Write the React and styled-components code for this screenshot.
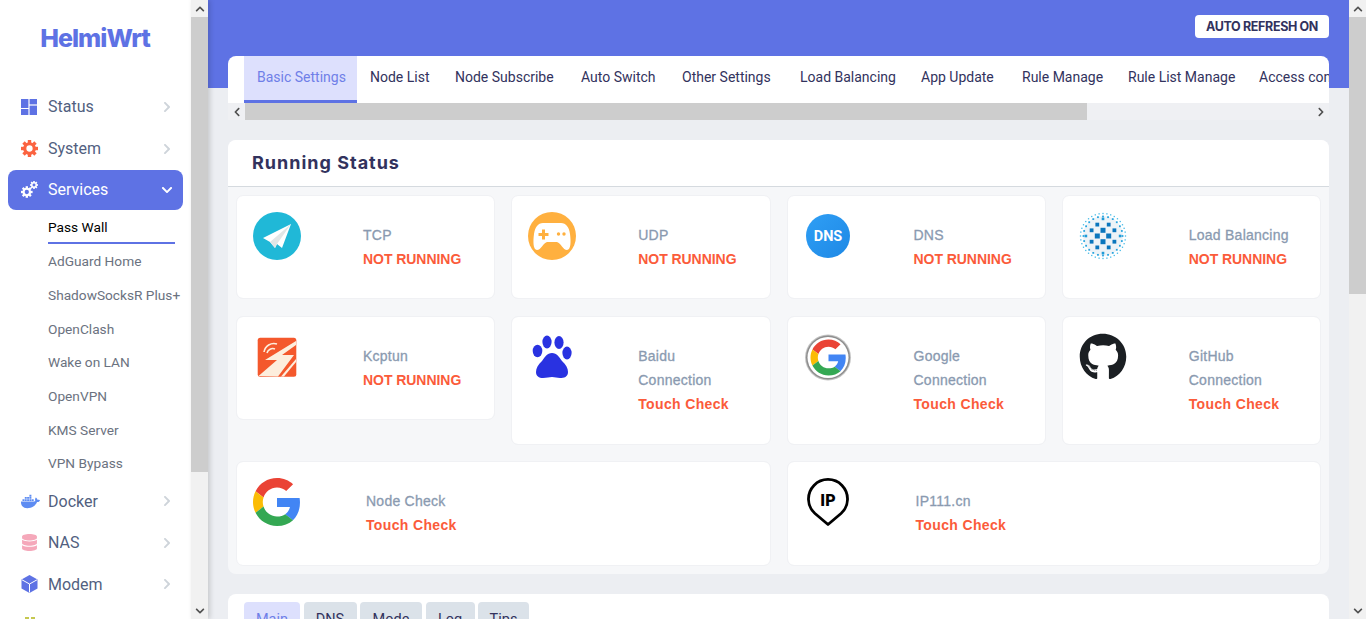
import React from 'react';
import styled, { createGlobalStyle } from 'styled-components';
import {
  FaChevronRight,
  FaChevronDown,
  FaChevronUp,
  FaChevronLeft,
  FaDocker,
  FaDatabase,
  FaGithub,
} from 'react-icons/fa';

const uiFont = 'Roboto, "Liberation Sans", sans-serif';
const cardFont = '"Liberation Sans", Arial, sans-serif';

const GlobalStyle = createGlobalStyle`
  html, body {
    margin: 0;
    height: 100%;
    overflow: hidden;
    background: #eceef2;
    font-family: ${uiFont};
  }
  #root {
    height: 100%;
  }
`;

const Page = styled.div`
  display: flex;
  height: 619px;
  overflow: hidden;
`;

const Sidebar = styled.aside`
  width: 191px;
  flex: none;
  background: #fff;
  overflow: hidden;
  display: flex;
  flex-direction: column;
`;

const Logo = styled.div`
  height: 76px;
  padding-bottom: 2px;
  flex: none;
  display: flex;
  justify-content: center;
  align-items: center;
  padding-right: 1px;
  color: #5e72e4;
  font-family: Inter, sans-serif;
  font-weight: 800;
  font-size: 25px;
  letter-spacing: -0.95px;
`;

const NavList = styled.nav`
  display: flex;
  flex-direction: column;
  padding: 8px 8px 0;
`;

const NavItem = styled.div`
  height: ${p => p.$h || 41.5}px;
  flex: none;
  display: flex;
  align-items: center;
  padding: 0 13px;
  border-radius: 8px;
  font-size: 16px;
  color: ${p => (p.$active ? '#fff' : '#525f7f')};
  background: ${p => (p.$active ? '#5e72e4' : 'transparent')};
`;

const NavIcon = styled.span`
  width: 27px;
  flex: none;
  display: flex;
  align-items: center;
  color: ${p => p.$color};
  font-size: ${p => p.$size || 17}px;
`;

const NavLabel = styled.span`
  flex: 1;
`;

const NavArrow = styled.span`
  display: flex;
  color: ${p => (p.$active ? '#fff' : '#ced4da')};
  font-size: 12px;
  margin-right: -3px;
`;

const SubList = styled.div`
  display: flex;
  flex-direction: column;
  padding: 0 0 1px 40px;
`;

const SubItem = styled.div`
  height: 33.7px;
  flex: none;
  box-sizing: border-box;
  padding-top: 2px;
  display: flex;
  align-items: center;
  font-size: 13.7px;
  white-space: nowrap;
  color: ${p => (p.$active ? '#000' : '#6b7280')};
  ${p => p.$active && 'width: 127px; height: 34px; padding-top: 3px; border-bottom: 2px solid #5e72e4;'}
`;

const VScrollbar = styled.div`
  width: 17px;
  flex: none;
  height: 619px;
  background: #f1f1f1;
  display: flex;
  flex-direction: column;
  justify-content: space-between;
  box-shadow: ${p => (p.$shadow ? '2px 0 5px rgba(0, 0, 0, 0.16)' : 'none')};
  z-index: 2;
`;

const VThumb = styled.div`
  width: 17px;
  height: ${p => p.$h}px;
  background: #cdcdcd;
  margin-bottom: auto;
`;

const ScrollButton = styled.div`
  width: 17px;
  height: 17px;
  flex: none;
  display: flex;
  align-items: center;
  justify-content: center;
  color: #505050;
  font-size: 10px;
  background: ${p => p.$bg || '#f1f1f1'};
`;

const Main = styled.main`
  flex: 1;
  min-width: 0;
  overflow: hidden;
  background: linear-gradient(#5e72e4 88px, #eceef2 88px);
  padding: 15px 20px 0;
  display: flex;
  flex-direction: column;
`;

const TopBar = styled.div`
  display: flex;
  justify-content: flex-end;
  margin-bottom: 18px;
`;

const RefreshButton = styled.div`
  height: 23px;
  width: 134px;
  display: flex;
  align-items: center;
  justify-content: center;
  background: #fff;
  border-radius: 4px;
  font-family: Inter, sans-serif;
  font-size: 12.5px;
  font-weight: 700;
  letter-spacing: -0.36px;
  color: #32325d;
`;

const TabsPanel = styled.div`
  margin-bottom: 20px;
  flex: none;
`;

const TabStrip = styled.div`
  height: 47px;
  display: flex;
  padding-left: 16px;
  background: #fff;
  border-radius: 8px 8px 0 0;
  overflow: hidden;
`;

const Tab = styled.div`
  flex: none;
  width: ${p => p.$w}px;
  height: 47px;
  box-sizing: border-box;
  padding: 0 0 2px 13px;
  display: flex;
  align-items: center;
  font-size: 14px;
  white-space: nowrap;
  color: ${p => (p.$active ? '#6f7fe8' : '#32325d')};
  background: ${p => (p.$active ? '#dde0fd' : 'transparent')};
  border-bottom: 3px solid ${p => (p.$active ? '#5e72e4' : 'transparent')};
`;

const HScrollbar = styled.div`
  height: 17px;
  display: flex;
  background: #eff0f3;
`;

const HThumb = styled.div`
  width: 842px;
  background: #cdcdcd;
  margin-right: auto;
`;

const Section = styled.section`
  flex: none;
  margin-bottom: 20px;
  border-radius: 8px;
  background: #f6f7f9;
  overflow: hidden;
  padding-bottom: 8px;
`;

const SectionTitle = styled.h3`
  margin: 0;
  height: 44px;
  padding: 0 0 2px 24px;
  display: flex;
  align-items: center;
  background: #fff;
  border-bottom: 1px solid #d5dadf;
  font-family: Inter, sans-serif;
  font-size: 18px;
  font-weight: 700;
  letter-spacing: 1px;
  color: #32325d;
`;

const CardGrid = styled.div`
  display: grid;
  grid-template-columns: repeat(4, 1fr);
  grid-template-rows: 104px 130px 105px;
  row-gap: 16px;
  column-gap: 16px;
  padding: 8px 8px 0;
`;

const Card = styled.div`
  grid-column: span ${p => p.$span || 1};
  align-self: start;
  height: ${p => p.$h}px;
  margin-top: ${p => p.$top || 0}px;
  box-sizing: border-box;
  display: grid;
  grid-template-columns: ${p => p.$col || 110}px 1fr;
  padding: 16px 8px 0 16px;
  background: #fff;
  background-clip: padding-box;
  border: 1px solid #f0f1f4;
  border-radius: 7px;
  font-family: ${cardFont};
`;

const CardIcon = styled.div`
  width: 48px;
  height: 48px;
  display: flex;
  font-size: 48px;
  color: #1b1f23;
`;

const CardText = styled.div`
  padding-top: 11px;
  display: flex;
  flex-direction: column;
  font-size: 14px;
  line-height: 24px;
`;

const CardLabel = styled.span`
  color: #8a9ab0;
  letter-spacing: 0.25px;
  -webkit-text-stroke: 0.3px #8a9ab0;
`;

const CardStatus = styled.span`
  color: #fb5b3a;
  font-weight: bold;
  letter-spacing: ${p => (p.$tight ? -0.05 : 0.35)}px;
`;

const LowerCard = styled.div`
  flex: none;
  background: #fff;
  border-radius: 8px 8px 0 0;
  padding: 8px 16px 0;
  display: flex;
  gap: 3.5px;
`;

const LowerTab = styled.div`
  height: 34px;
  box-sizing: border-box;
  width: ${p => p.$w}px;
  display: flex;
  justify-content: center;
  align-items: center;
  border-radius: 4px 4px 0 0;
  font-size: 14.5px;
  color: ${p => (p.$active ? '#6f7fe8' : '#32325d')};
  background: ${p => (p.$active ? '#dde0fd' : '#dbe2e9')};
`;

const DashIcon = () => (
  <svg width="16" height="16" viewBox="0 0 16 16" fill="#5e72e4">
    <rect x="0" y="0" width="7.4" height="9" />
    <rect x="0" y="10" width="7.4" height="6" />
    <rect x="8.6" y="0" width="7.4" height="5.4" />
    <rect x="8.6" y="6.6" width="7.4" height="9.4" />
  </svg>
);

const Gear = ({ cx, cy, r, color, teeth = 8 }) => (
  <g>
    <circle cx={cx} cy={cy} r={r * 0.56} fill="none" stroke={color} strokeWidth={r * 0.38} />
    {Array.from({ length: teeth }, (_, i) => (
      <rect
        key={i}
        x={cx - r * 0.2}
        y={cy - r}
        width={r * 0.4}
        height={r * 0.4}
        fill={color}
        transform={`rotate(${(360 / teeth) * i} ${cx} ${cy})`}
      />
    ))}
  </g>
);

const SystemIcon = () => (
  <svg width="17" height="17" viewBox="0 0 17 17">
    <Gear cx={8.5} cy={8.5} r={8.5} color="#fb6340" />
  </svg>
);

const ServicesIcon = () => (
  <svg width="17" height="17" viewBox="0 0 17 17">
    <Gear cx={5.8} cy={11} r={5.8} color="#fff" />
    <Gear cx={13} cy={4} r={4} color="#fff" />
  </svg>
);

const ModemIcon = () => (
  <svg width="17" height="18" viewBox="0 0 17 18">
    <polygon points="8.5,0 16.5,4.500 16.500,13.500 8.500,18 0.500,13.500 0.500,4.500" fill="#5e72e4" />
    <path d="M1 4.800 L8.500 9 L16 4.800 M8.500 9 V17.500" stroke="#fff" strokeWidth="1" fill="none" />
  </svg>
);

const PeekIcon = () => (
  <svg width="17" height="18" viewBox="0 0 17 18" fill="#c5c84f">
    <rect x="4" y="0" width="4" height="2" />
    <rect x="10" y="0" width="4" height="2" />
  </svg>
);

const PlaneIcon = () => (
  <svg width="48" height="48" viewBox="0 0 48 48">
    <circle cx="24" cy="24" r="24" fill="#20b8d7" />
    <polygon points="38,12 10,26 17,30 22,36 24,32 29,36" fill="#fff" />
    <polygon points="38,12 17,30 22,36 24,32" fill="#e2e6e6" />
  </svg>
);

const GameIcon = () => (
  <svg width="48" height="48" viewBox="0 0 48 48">
    <circle cx="24" cy="24" r="24" fill="#ffb03f" />
    <path
      d="M15 11 h18 c5 0 8 4 9 11 c1 7 1 16 -3 16 c-4 0 -6 -7 -10 -8 h-10 c-4 1 -6 8 -10 8 c-4 0 -4 -9 -3 -16 c1 -7 4 -11 9 -11z"
      fill="#fff"
    />
    <path d="M14 17.500 h3 v3.500 h3.500 v3 h-3.500 v3.500 h-3 v-3.500 h-3.500 v-3 h3.500z" fill="#ffb03f" />
    <circle cx="30.500" cy="22" r="1.700" fill="#ffb03f" />
    <circle cx="36" cy="22" r="1.700" fill="#ffb03f" />
  </svg>
);

const DnsIcon = () => (
  <svg width="48" height="48" viewBox="0 0 48 48">
    <defs>
      <linearGradient id="dnsFill" x1="0" y1="0" x2="1" y2="1">
        <stop offset="0" stopColor="#2f9ff5" />
        <stop offset="1" stopColor="#1e88e5" />
      </linearGradient>
    </defs>
    <circle cx="24" cy="24" r="22" fill="url(#dnsFill)" />
    <text x="24" y="29" textAnchor="middle" fill="#fff" fontFamily="Roboto, sans-serif" fontWeight="700" fontSize="14.5">
      DNS
    </text>
  </svg>
);

// squares on a diagonal lattice, with two rings of fine dots round them
const sphereDots = [];
for (let a = -3; a <= 3; a++) {
  for (let b = -3; b <= 3; b++) {
    if ((a + b) % 2 === 0) continue;
    const x = a * 5.7;
    const y = b * 5.7;
    const d = Math.hypot(x, y);
    if (d <= 19) {
      const size = d < 7 ? 5 : d < 13 ? 3.8 : 2.6;
      sphereDots.push({ x: 24 + x, y: 24 + y, size, fill: d < 13 ? '#0b76bd' : '#1f9bd8' });
    }
  }
}
[
  { r: 19.5, n: 24, size: 1.8, fill: '#2aa5df' },
  { r: 22.5, n: 36, size: 1.3, fill: '#45bbe8' },
].forEach(ring => {
  for (let i = 0; i < ring.n; i++) {
    const t = (i / ring.n) * Math.PI * 2;
    sphereDots.push({
      x: 24 + Math.cos(t) * ring.r,
      y: 24 + Math.sin(t) * ring.r,
      size: ring.size,
      fill: ring.fill,
    });
  }
});

const SphereIcon = () => (
  <svg width="48" height="48" viewBox="0 0 48 48">
    <circle cx="24" cy="24" r="20" fill="#eef3f7" />
    {sphereDots.map(s => (
      <rect
        key={`${s.x}-${s.y}`}
        x={s.x - s.size / 2}
        y={s.y - s.size / 2}
        width={s.size}
        height={s.size}
        fill={s.fill}
      />
    ))}
  </svg>
);

const KcptunIcon = () => (
  <svg width="48" height="48" viewBox="0 0 48 48">
    <rect x="4.700" y="4.700" width="38.600" height="39" rx="2.500" fill="#f4582c" />
    <path d="M43 8 L12 27 L24 27 L5.500 43 L25 43.500 L41 22 L29 22 L43 12z" fill="#fdeedd" />
    <path d="M28 43.500 L43 26 L43 29 L31 43.500z" fill="#fdeedd" />
    <path d="M11 19 a10 10 0 0 1 13 -8 M14 20 a6 6 0 0 1 8 -4" stroke="#fdeedd" strokeWidth="1.600" fill="none" />
  </svg>
);

const PawIcon = () => (
  <svg width="48" height="48" viewBox="0 0 48 48" fill="#2932e1">
    <ellipse cx="9.500" cy="18" rx="4.800" ry="6.200" />
    <ellipse cx="19" cy="9" rx="4.600" ry="6.400" />
    <ellipse cx="31" cy="9.500" rx="4.600" ry="6.400" />
    <ellipse cx="39" cy="20" rx="4.600" ry="6.400" />
    <path d="M24 20 c5 0 7 4 10 8 c4 4 6 7 6 11 c0 5 -4 6 -8 6 c-3 0 -5 -1 -8 -1 c-3 0 -5 1 -9 1 c-4 0 -7 -2 -7 -6 c0 -4 2 -7 6 -11 c3 -4 5 -8 10 -8z" />
  </svg>
);

const GooglePaths = () => (
  <>
    <path fill="#EA4335" d="M24 9.5c3.54 0 6.71 1.22 9.21 3.6l6.85-6.85C35.9 2.38 30.47 0 24 0 14.62 0 6.51 5.38 2.56 13.22l7.98 6.19C12.43 13.72 17.74 9.5 24 9.5z" />
    <path fill="#4285F4" d="M46.98 24.55c0-1.57-.15-3.09-.38-4.55H24v9.02h12.94c-.58 2.96-2.26 5.48-4.78 7.18l7.73 6c4.51-4.18 7.09-10.36 7.09-17.65z" />
    <path fill="#FBBC05" d="M10.53 28.59c-.48-1.45-.76-2.99-.76-4.59s.27-3.14.76-4.59l-7.98-6.19C.92 16.46 0 20.12 0 24c0 3.88.92 7.54 2.56 10.78l7.97-6.19z" />
    <path fill="#34A853" d="M24 48c6.48 0 11.93-2.13 16.02-5.81l-7.73-6c-2.15 1.45-4.92 2.3-8.3 2.3-6.26 0-11.57-4.22-13.47-9.91l-7.98 6.19C6.51 42.62 14.62 48 24 48z" />
  </>
);

const GoogleIcon = () => (
  <svg width="48" height="48" viewBox="0 0 48 48">
    <GooglePaths />
  </svg>
);

const GoogleRingIcon = () => (
  <svg width="48" height="48" viewBox="0 0 48 48">
    <circle cx="24" cy="24.500" r="23" fill="#c4c4c4" />
    <circle cx="24" cy="24.500" r="22" fill="#8e8e8e" />
    <circle cx="24" cy="24.500" r="20.500" fill="#fff" />
    <g transform="translate(6.500 6.500) scale(0.75)">
      <GooglePaths />
    </g>
  </svg>
);

const PinIcon = () => (
  <svg width="48" height="48" viewBox="0 0 48 48">
    <path d="M24 46.500 L11 35.500 A19.500 19.500 0 1 1 37 35.500 Z" fill="none" stroke="#000" strokeWidth="2.800" strokeLinejoin="round" />
    <text x="24" y="27.500" textAnchor="middle" fontFamily="Roboto, sans-serif" fontWeight="900" fontSize="16" fill="#000">
      IP
    </text>
  </svg>
);

const subItems = [
  'AdGuard Home',
  'ShadowSocksR Plus+',
  'OpenClash',
  'Wake on LAN',
  'OpenVPN',
  'KMS Server',
  'VPN Bypass',
];

const cards = [
  { id: 'tcp', icon: <PlaneIcon />, lines: ['TCP'], status: 'NOT RUNNING', h: 104 },
  { id: 'udp', icon: <GameIcon />, lines: ['UDP'], status: 'NOT RUNNING', h: 104 },
  { id: 'dns', icon: <DnsIcon />, lines: ['DNS'], status: 'NOT RUNNING', h: 104 },
  { id: 'lb', icon: <SphereIcon />, lines: ['Load Balancing'], status: 'NOT RUNNING', h: 104 },
  { id: 'kcp', icon: <KcptunIcon />, lines: ['Kcptun'], status: 'NOT RUNNING', h: 104, top: 1 },
  { id: 'baidu', icon: <PawIcon />, lines: ['Baidu', 'Connection'], status: 'Touch Check', h: 129, top: 1 },
  { id: 'google', icon: <GoogleRingIcon />, lines: ['Google', 'Connection'], status: 'Touch Check', h: 129, top: 1 },
  { id: 'github', icon: <FaGithub />, lines: ['GitHub', 'Connection'], status: 'Touch Check', h: 129, top: 1 },
  { id: 'node', icon: <GoogleIcon />, lines: ['Node Check'], status: 'Touch Check', h: 105, span: 2, col: 113 },
  { id: 'ip', icon: <PinIcon />, lines: ['IP111.cn'], status: 'Touch Check', h: 105, span: 2, col: 112 },
];

const tabs = [
  { label: 'Basic Settings', w: 113 },
  { label: 'Node List', w: 85 },
  { label: 'Node Subscribe', w: 126 },
  { label: 'Auto Switch', w: 101 },
  { label: 'Other Settings', w: 118 },
  { label: 'Load Balancing', w: 121 },
  { label: 'App Update', w: 101 },
  { label: 'Rule Manage', w: 106 },
  { label: 'Rule List Manage', w: 131 },
  { label: 'Access control', w: 120 },
];

const lowerTabs = [
  { label: 'Main', w: 56 },
  { label: 'DNS', w: 53 },
  { label: 'Mode', w: 62 },
  { label: 'Log', w: 49 },
  { label: 'Tips', w: 51 },
];

const App = () => (
  <Page>
    <GlobalStyle />
    <Sidebar>
      <Logo>HelmiWrt</Logo>
      <NavList>
        <NavItem>
          <NavIcon><DashIcon /></NavIcon>
          <NavLabel>Status</NavLabel>
          <NavArrow><FaChevronRight /></NavArrow>
        </NavItem>
        <NavItem $h={42}>
          <NavIcon><SystemIcon /></NavIcon>
          <NavLabel>System</NavLabel>
          <NavArrow><FaChevronRight /></NavArrow>
        </NavItem>
        <NavItem $active $h={40}>
          <NavIcon><ServicesIcon /></NavIcon>
          <NavLabel>Services</NavLabel>
          <NavArrow $active><FaChevronDown /></NavArrow>
        </NavItem>
        <SubList>
          <SubItem $active>Pass Wall</SubItem>
          {subItems.map(item => (
            <SubItem key={item}>{item}</SubItem>
          ))}
        </SubList>
        <NavItem>
          <NavIcon $color="#5e8cf2" $size={19}><FaDocker /></NavIcon>
          <NavLabel>Docker</NavLabel>
          <NavArrow><FaChevronRight /></NavArrow>
        </NavItem>
        <NavItem>
          <NavIcon $color="#f5a8ba"><FaDatabase /></NavIcon>
          <NavLabel>NAS</NavLabel>
          <NavArrow><FaChevronRight /></NavArrow>
        </NavItem>
        <NavItem>
          <NavIcon><ModemIcon /></NavIcon>
          <NavLabel>Modem</NavLabel>
          <NavArrow><FaChevronRight /></NavArrow>
        </NavItem>
        <NavItem>
          <NavIcon><PeekIcon /></NavIcon>
        </NavItem>
      </NavList>
    </Sidebar>
    <VScrollbar $shadow>
      <ScrollButton><FaChevronUp /></ScrollButton>
      <VThumb $h={455} />
      <ScrollButton><FaChevronDown /></ScrollButton>
    </VScrollbar>
    <Main>
      <TopBar>
        <RefreshButton>AUTO REFRESH ON</RefreshButton>
      </TopBar>
      <TabsPanel>
        <TabStrip>
          {tabs.map((tab, i) => (
            <Tab key={tab.label} $w={tab.w} $active={i === 0}>{tab.label}</Tab>
          ))}
        </TabStrip>
        <HScrollbar>
          <ScrollButton $bg="#eff0f3"><FaChevronLeft /></ScrollButton>
          <HThumb />
          <ScrollButton $bg="#eff0f3"><FaChevronRight /></ScrollButton>
        </HScrollbar>
      </TabsPanel>
      <Section>
        <SectionTitle>Running Status</SectionTitle>
        <CardGrid>
          {cards.map(card => (
            <Card key={card.id} $h={card.h} $span={card.span} $col={card.col} $top={card.top}>
              <CardIcon>{card.icon}</CardIcon>
              <CardText>
                {card.lines.map(line => (
                  <CardLabel key={line}>{line}</CardLabel>
                ))}
                <CardStatus $tight={card.status === 'NOT RUNNING'}>{card.status}</CardStatus>
              </CardText>
            </Card>
          ))}
        </CardGrid>
      </Section>
      <LowerCard>
        {lowerTabs.map((tab, i) => (
          <LowerTab key={tab.label} $w={tab.w} $active={i === 0}>{tab.label}</LowerTab>
        ))}
      </LowerCard>
    </Main>
    <VScrollbar>
      <ScrollButton><FaChevronUp /></ScrollButton>
      <VThumb $h={277} />
      <ScrollButton><FaChevronDown /></ScrollButton>
    </VScrollbar>
  </Page>
);

export default App;
